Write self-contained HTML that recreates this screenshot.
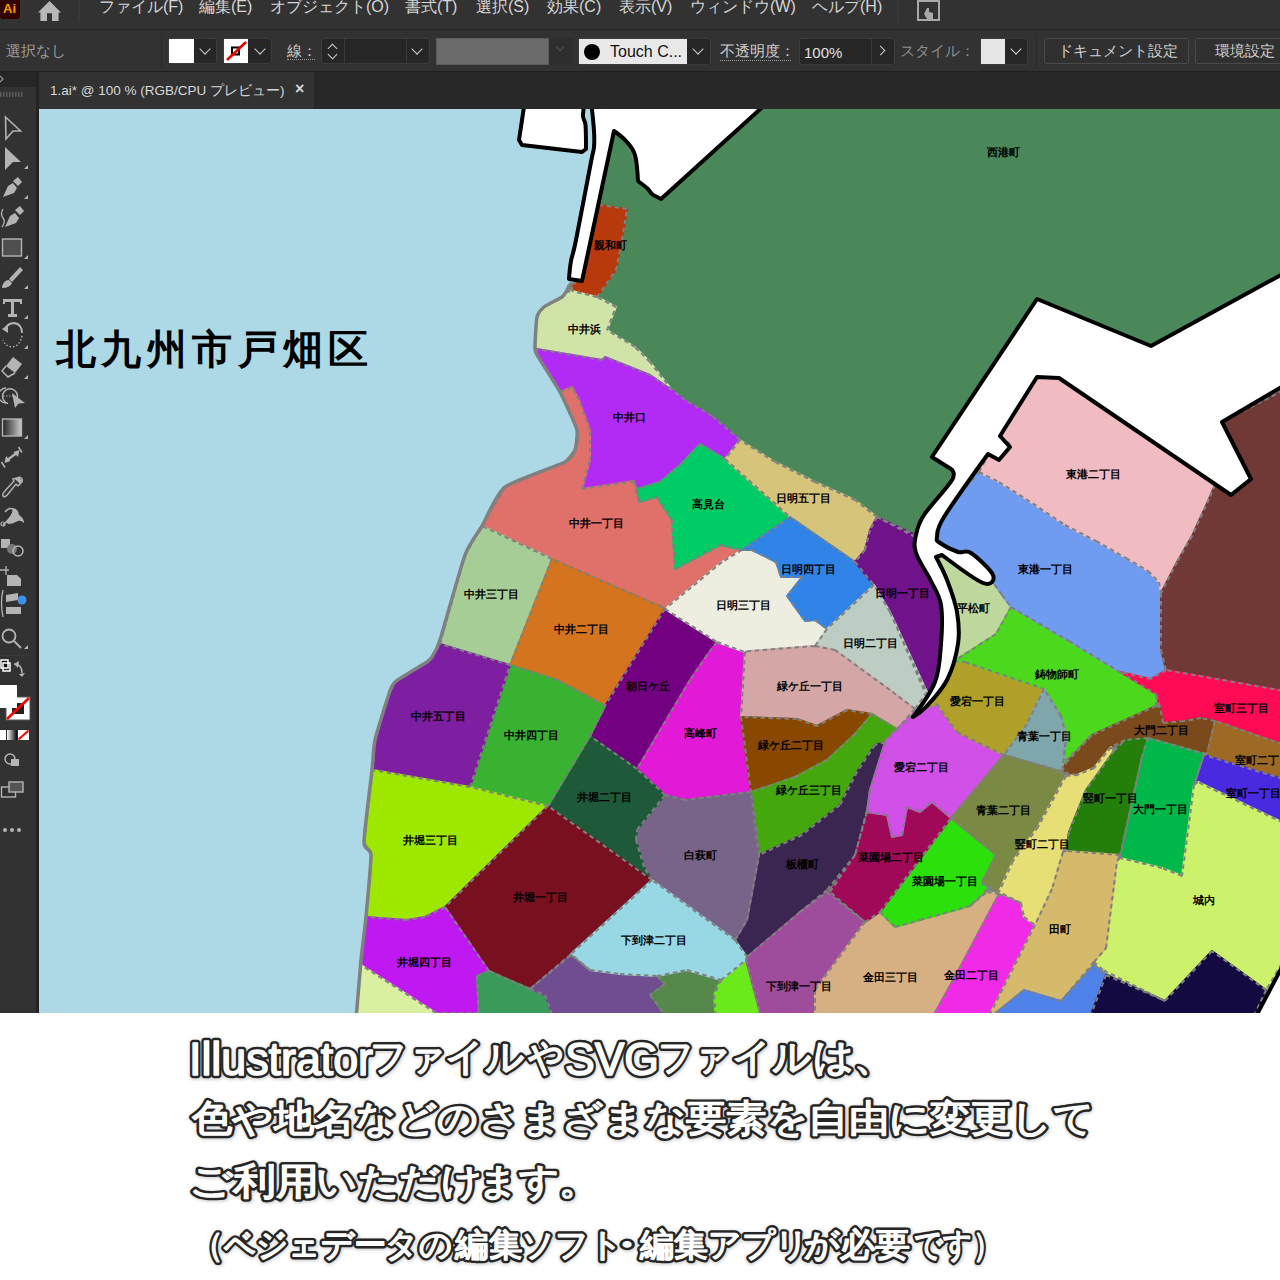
<!DOCTYPE html>
<html><head><meta charset="utf-8">
<style>
*{box-sizing:border-box;margin:0;padding:0}
html,body{width:1280px;height:1280px;overflow:hidden;background:#fff;font-family:"Liberation Sans",sans-serif}
.abs{position:absolute}
#menubar{left:0;top:0;width:1280px;height:30px;background:#323232;border-bottom:1px solid #282828}
#ctrl{left:0;top:30px;width:1280px;height:42px;background:#323232;border-bottom:1px solid #1f1f1f}
#tabbar{left:0;top:72px;width:1280px;height:37px;background:#282828}
#tools{left:0;top:72px;width:36px;height:941px;background:#323232}
#toolsep{left:36px;top:72px;width:3px;height:941px;background:#232323}
.mi{position:absolute;top:-3px;font-size:16px;color:#d6d6d6;white-space:nowrap;letter-spacing:0px}
.ct{position:absolute;font-size:15px;white-space:nowrap}
.dd{position:absolute;background:#262626;border:1px solid #3c3c3c;border-radius:3px}
.chev{position:absolute;width:8px;height:8px;border-right:1.6px solid #cfcfcf;border-bottom:1.6px solid #cfcfcf;transform:rotate(45deg)}
#map{left:0;top:0}
#bottom{left:0;top:1013px;width:1280px;height:267px;background:#fff}
.bt{position:absolute;white-space:nowrap;color:#fff;-webkit-text-stroke:0;font-weight:500}
</style></head><body>
<div id="menubar" class="abs">
  <div class="abs" style="left:0;top:0;width:20px;height:19px;background:#330000;border-radius:0 0 3px 3px"></div>
  <div class="abs" style="left:3px;top:1px;font-size:13px;font-weight:bold;color:#ff9a00">Ai</div>
  <svg class="abs" style="left:37px;top:0" width="26" height="22" viewBox="0 0 26 22"><path d="M12.5 1 L24 12.5 L21.6 12.5 L21.6 21 L15 21 L15 13.3 L10 13.3 L10 21 L3.4 21 L3.4 12.5 L1 12.5 Z" fill="#b8b8b8"/></svg>
  <div class="abs" style="left:78px;top:0;width:2px;height:22px;background:#383838"></div>
  <div class="mi" style="left:99px">ファイル(F)</div>
  <div class="mi" style="left:199px">編集(E)</div>
  <div class="mi" style="left:270px">オブジェクト(O)</div>
  <div class="mi" style="left:405px">書式(T)</div>
  <div class="mi" style="left:476px">選択(S)</div>
  <div class="mi" style="left:547px">効果(C)</div>
  <div class="mi" style="left:619px">表示(V)</div>
  <div class="mi" style="left:690px">ウィンドウ(W)</div>
  <div class="mi" style="left:812px">ヘルプ(H)</div>
  <div class="abs" style="left:897px;top:0;width:2px;height:22px;background:#383838"></div>
  <svg class="abs" style="left:916px;top:0" width="26" height="22" viewBox="0 0 26 22"><rect x="2" y="1" width="21" height="19" fill="none" stroke="#a8a8a8" stroke-width="2"/><path d="M11 8 L13 8 L13 12 L17 13 L17 19 L11 19 L8 14 Z" fill="#a8a8a8"/></svg>
</div>
<div id="ctrl" class="abs">
  <div class="ct" style="left:6px;top:12px;color:#9c9c9c">選択なし</div>
  <div class="abs" style="left:161px;top:4px;width:1px;height:34px;background:#2a2a2a"></div>
  <div class="dd" style="left:168px;top:8px;width:49px;height:26px"></div>
  <div class="abs" style="left:169px;top:9px;width:25px;height:24px;background:#fff"></div>
  <div class="chev" style="left:201px;top:15px"></div>
  <div class="dd" style="left:223px;top:8px;width:49px;height:26px"></div>
  <div class="abs" style="left:224px;top:9px;width:24px;height:24px;background:#fff"></div>
  <svg class="abs" style="left:224px;top:39px;top:9px" width="24" height="24"><rect x="8" y="8.5" width="7" height="7" fill="none" stroke="#000" stroke-width="2"/><line x1="3" y1="21" x2="22" y2="3" stroke="#e00" stroke-width="2.6"/></svg>
  <div class="chev" style="left:256px;top:15px"></div>
  <div class="ct" style="left:287px;top:12px;color:#cfcfcf">線：</div>
  <div class="abs" style="left:287px;top:29px;width:28px;height:0;border-top:1px dotted #9a9a9a"></div>
  <div class="dd" style="left:321px;top:8px;width:109px;height:26px"></div>
  <div class="abs" style="left:344px;top:9px;width:1px;height:24px;background:#3a3a3a"></div>
  <div class="abs" style="left:406px;top:9px;width:1px;height:24px;background:#3a3a3a"></div>
  <div class="abs" style="left:329px;top:15px;width:7px;height:7px;border-left:1.6px solid #cfcfcf;border-top:1.6px solid #cfcfcf;transform:rotate(45deg)"></div>
  <div class="abs" style="left:329px;top:21px;width:7px;height:7px;border-right:1.6px solid #cfcfcf;border-bottom:1.6px solid #cfcfcf;transform:rotate(45deg)"></div>
  <div class="chev" style="left:413px;top:15px"></div>
  <div class="abs" style="left:436px;top:8px;width:113px;height:27px;background:#6b6b6b;border:1px solid #5a5a5a"></div>
  <div class="abs" style="left:549px;top:8px;width:24px;height:27px;background:#2e2e2e"></div>
  <div class="abs" style="left:557px;top:14px;width:6px;height:6px;border-right:1.4px solid #555;border-bottom:1.4px solid #555;transform:rotate(45deg)"></div>
  <div class="dd" style="left:578px;top:8px;width:133px;height:27px"></div>
  <div class="abs" style="left:579px;top:9px;width:108px;height:25px;background:#e8e8e8"></div>
  <div class="abs" style="left:584px;top:14px;width:16px;height:16px;border-radius:50%;background:#000"></div>
  <div class="ct" style="left:610px;top:13px;color:#111;font-size:16px">Touch C...</div>
  <div class="chev" style="left:694px;top:15px"></div>
  <div class="ct" style="left:720px;top:12px;color:#cfcfcf">不透明度：</div>
  <div class="abs" style="left:720px;top:30px;width:71px;height:0;border-top:1px dotted #9a9a9a"></div>
  <div class="dd" style="left:799px;top:8px;width:96px;height:27px"></div>
  <div class="abs" style="left:871px;top:9px;width:1px;height:25px;background:#3a3a3a"></div>
  <div class="ct" style="left:804px;top:14px;color:#e0e0e0;font-size:15px">100%</div>
  <div class="abs" style="left:877px;top:17px;width:7px;height:7px;border-right:1.6px solid #cfcfcf;border-top:1.6px solid #cfcfcf;transform:rotate(45deg)"></div>
  <div class="ct" style="left:900px;top:12px;color:#8e8e8e">スタイル：</div>
  <div class="dd" style="left:980px;top:8px;width:48px;height:27px"></div>
  <div class="abs" style="left:981px;top:9px;width:24px;height:25px;background:#e6e6e6"></div>
  <div class="chev" style="left:1012px;top:15px"></div>
  <div class="abs" style="left:1036px;top:4px;width:1px;height:34px;background:#2a2a2a"></div>
  <div class="abs" style="left:1044px;top:8px;width:145px;height:26px;border:1px solid #4a4a4a;border-radius:3px;background:#303030"></div>
  <div class="ct" style="left:1058px;top:12px;color:#d0d0d0">ドキュメント設定</div>
  <div class="abs" style="left:1195px;top:8px;width:100px;height:26px;border:1px solid #4a4a4a;border-radius:3px;background:#303030"></div>
  <div class="ct" style="left:1215px;top:12px;color:#d0d0d0">環境設定</div>
</div>
<div id="tabbar" class="abs">
  <div class="abs" style="left:0;top:0;width:36px;height:15px;background:#262626"></div>
  <div class="abs" style="left:39px;top:0;width:275px;height:37px;background:#323232"></div>
  <div class="abs" style="left:50px;top:10px;font-size:13.5px;color:#d8d8d8;white-space:nowrap">1.ai* @ 100 % (RGB/CPU プレビュー)</div>
  <div class="abs" style="left:295px;top:8px;font-size:16px;color:#d8d8d8;font-weight:bold">×</div>
</div>
<div id="tools" class="abs"></div>
<svg class="abs" style="left:0;top:72px" width="36" height="941" viewBox="0 72 36 941">
 <rect x="0" y="72" width="36" height="15" fill="#262626"/>
 <g fill="#5c5c5c"><rect x="0" y="92" width="1.5" height="5"/><rect x="3" y="92" width="1.5" height="5"/><rect x="6" y="92" width="1.5" height="5"/><rect x="9" y="92" width="1.5" height="5"/><rect x="12" y="92" width="1.5" height="5"/><rect x="15" y="92" width="1.5" height="5"/><rect x="18" y="92" width="1.5" height="5"/><rect x="21" y="92" width="1.5" height="5"/></g>
 <path d="M0 76 L3 79 L0 82" fill="none" stroke="#9a9a9a" stroke-width="1.2"/>
 <g fill="#b4b4b4" stroke="none">
  <path d="M5.5 117 L20.5 131 L13 131 L6 139 Z" fill="none" stroke="#b4b4b4" stroke-width="1.6"/>
  <path d="M5 147 L21 162 L13 162 L5 170 Z"/>
  <path d="M24 169 L28 165 L28 169 Z"/>
  <path d="M13 181 L18 177 L22 182 L18 186 Z M3 197 L8 186 L13 183 L17 188 L14 193 Z"/>
  <path d="M24 199 L28 195 L28 199 Z"/>
  <path d="M15 210 L20 206 L24 211 L20 215 Z M5 227 L10 216 L15 213 L19 218 L16 223 Z"/>
  <path d="M3 209 Q0 214 3 218 Q6 222 2 227" fill="none" stroke="#b4b4b4" stroke-width="1.3"/>
  <rect x="2.5" y="239" width="19" height="17" fill="#4f4f4f" stroke="#b4b4b4" stroke-width="1.4"/>
  <path d="M24 259 L28 255 L28 259 Z"/>
  <path d="M20 267 L23 270 L12 282 L9 279 Z M2 288 Q3 280 9 280 L12 283 Q10 288 2 288 Z"/>
  <path d="M24 289 L28 285 L28 289 Z"/>
  <path d="M3 299 L22 299 L22 304 L20 304 L20 302 L14 302 L14 314 L17 314 L17 317 L8 317 L8 314 L11 314 L11 302 L5 302 L5 304 L3 304 Z"/>
  <path d="M24 319 L28 315 L28 319 Z"/>
  <path d="M4 330 Q8 323 14 323 Q22 324 22 333" fill="none" stroke="#b4b4b4" stroke-width="1.8"/>
  <path d="M2 329 L8 325 L8 333 Z"/>
  <path d="M22 336 Q20 346 12 347 Q5 346 3 340" fill="none" stroke="#b4b4b4" stroke-width="1.4" stroke-dasharray="1.4 2"/>
  <path d="M24 349 L28 345 L28 349 Z"/>
  <path d="M13 357 L22 364 L15 373 L6 366 Z" />
  <path d="M6 366 L2 371 L8 377 L15 373" fill="none" stroke="#b4b4b4" stroke-width="1.5"/>
  <path d="M24 379 L28 375 L28 379 Z"/>
  <path d="M17 399 A7.5 7.5 0 1 0 8 403.5" fill="none" stroke="#b4b4b4" stroke-width="1.5"/>
  <path d="M6 388 A6 6 0 0 0 6 403" fill="none" stroke="#b4b4b4" stroke-width="1.3"/>
  <path d="M3 396 L15 396" stroke="#b4b4b4" stroke-width="1.2" stroke-dasharray="1.5 1.5"/>
  <path d="M12 393 L25 403 L18.5 403.5 L15 408 Z"/>
  <defs><linearGradient id="gr" x1="0" x2="1"><stop offset="0" stop-color="#222"/><stop offset="1" stop-color="#ccc"/></linearGradient></defs>
  <rect x="2.5" y="419" width="19" height="17" fill="url(#gr)" stroke="#b4b4b4" stroke-width="1.4"/>
  <path d="M24 439 L28 435 L28 439 Z"/>
  <path d="M1.5 462 L5 467.5 M18.5 447 L22 452.5" stroke="#b4b4b4" stroke-width="1.5"/>
  <path d="M6 461 L18 452" stroke="#b4b4b4" stroke-width="2.2"/>
  <path d="M4.5 463 L6 456 L10.5 461 Z M19.5 450 L18 457 L13.5 452 Z"/>
  <path d="M17 478 Q20 476 22 479 Q23 482 20 484 L18 486 L16 484 L8 494 Q5 498 3 496 Q2 494 5 491 L14 481 L13 479 Z" fill="none" stroke="#b4b4b4" stroke-width="1.5"/>
  <path d="M15 479 L20 484 L22 481 L19 477 Z"/>
  <path d="M5 512 Q10 506 14 510 Q12 516 8 520 L3 525" fill="none" stroke="#b4b4b4" stroke-width="1.5"/>
  <path d="M6 522 Q15 512 12 508 Q18 508 19 515 Q24 518 24 523 Q20 519 16 522 Q12 524 8 524 Z"/>
  <circle cx="3" cy="524" r="2" fill="none" stroke="#b4b4b4" stroke-width="1.2"/>
  <rect x="1" y="539" width="9" height="9"/>
  <circle cx="12" cy="549" r="5" fill="#777"/>
  <circle cx="18" cy="551" r="5" fill="none" stroke="#b4b4b4" stroke-width="1.5"/>
  <path d="M6 566 L6 575 M0 570 L9 570" stroke="#b4b4b4" stroke-width="1.3"/>
  <path d="M7 575 L17 575 L21 579 L21 586 L7 586 Z"/>
  <path d="M3 590 Q0 603 3 617" fill="none" stroke="#b4b4b4" stroke-width="1.3"/>
  <path d="M6 595 L18 593 L18 600 L6 602 Z M6 607 L21 607 L21 614 L6 614 Z"/>
 </g>
 <circle cx="22" cy="600" r="4.5" fill="#3d8ff0"/>
 <g fill="none" stroke="#b4b4b4" stroke-width="1.8"><circle cx="9" cy="636" r="6.5"/><path d="M14 641 L21 648"/></g>
 <path d="M24 649 L28 645 L28 649 Z" fill="#b4b4b4"/>
 <rect x="0" y="655" width="30" height="1" fill="#3a3a3a"/>
 <g fill="none" stroke="#b4b4b4" stroke-width="1.5"><rect x="1" y="660" width="7" height="8" fill="#111" stroke="#fff"/><rect x="3" y="663" width="7" height="8" stroke="#fff"/><path d="M22 673 Q22 664 14 664"/></g>
 <path d="M19 661 L14 664 L18 668 Z M19 674 L22 677 L25 673 Z" fill="#b4b4b4"/>
 <rect x="6" y="697" width="24" height="23" fill="#fff" stroke="#555" stroke-width="1"/>
 <rect x="12" y="703" width="12" height="11" fill="#222"/>
 <line x1="7" y1="719" x2="29" y2="698" stroke="#f00" stroke-width="2.6"/>
 <rect x="0" y="685" width="17" height="23" fill="#fff"/>
 <rect x="0" y="730" width="6" height="10" fill="#fff"/>
 <rect x="7" y="730" width="10" height="10" fill="url(#gr2)"/>
 <defs><linearGradient id="gr2" x1="0" x2="1"><stop offset="0" stop-color="#fff"/><stop offset="1" stop-color="#000"/></linearGradient></defs>
 <rect x="18" y="730" width="11" height="10" fill="#fff"/>
 <line x1="18.5" y1="739.5" x2="28.5" y2="730.5" stroke="#f00" stroke-width="2"/>
 <circle cx="10" cy="759" r="5" fill="none" stroke="#b4b4b4" stroke-width="1.5"/>
 <rect x="11" y="759" width="8" height="7" fill="#b4b4b4"/>
 <g fill="none" stroke="#b4b4b4" stroke-width="1.4"><rect x="1.5" y="787" width="14" height="10"/><rect x="9" y="782" width="14" height="10" fill="#555"/></g>
 <g fill="#b4b4b4"><circle cx="5" cy="830" r="2"/><circle cx="12" cy="830" r="2"/><circle cx="19" cy="830" r="2"/></g>
</svg>
<div id="toolsep" class="abs"></div>
<div id="mapwrap" class="abs" style="left:39px;top:109px;width:1241px;height:904px;overflow:hidden;background:#add8e6">
<svg id="map" class="abs" style="left:-39px;top:-109px" width="1280" height="1280" viewBox="0 0 1280 1280">
<!--MAP-->
<polygon points="356,1020 361,960 366,917 371,855 364,842 372,770 375,740 388,697 395,682 427,662 432,657 440,640 465,555 482,526 505,487 565,462 575,450 577,430 560,392 537,355 535,347 537,317 544,307 562,297 566,292 569,286 572,283 572,283 580,281 614,131 1290,100 1290,1020" fill="#808080"/>
<polygon points="614,131 625,140 635,162 639,182 650,189 660,199 757,112 765,100 1290,100 1290,276 1151,346 1037,299 931,458 951,468 951,483 928,513 915,537 877,517 855,500 815,482 775,462 740,440 712,416 685,400 672,390 650,362 635,347 607,330 616,307 597,297 616,270 622,240 627,209 599,205" fill="#4a8759" stroke="#4a8759" stroke-width="2" stroke-linejoin="round"/>
<polygon points="599,205 627,209 622,240 616,270 597,297 572,291 572,284 580,281" fill="#b8390b" stroke="#b8390b" stroke-width="2" stroke-linejoin="round"/>
<polygon points="572,291 597,297 616,307 607,330 635,347 650,362 672,390 650,375 605,357 602,360 537,349 535,347 537,317 544,307 562,297 566,292" fill="#d0e4a8" stroke="#d0e4a8" stroke-width="2" stroke-linejoin="round"/>
<polygon points="537,349 602,360 605,357 650,375 672,390 685,400 712,416 740,440 725,459 700,444 680,465 660,482 637,489 634,481 582,489 590,460 590,430 579,400 572,387 560,392 537,355" fill="#b22af5" stroke="#b22af5" stroke-width="2" stroke-linejoin="round"/>
<polygon points="560,392 572,387 579,400 590,430 590,460 582,489 634,481 639,502 657,497 672,520 675,569 720,545 742,550 722,562 665,609 662,607 552,559 482,526 505,487 565,462 575,450 577,430" fill="#e0706a" stroke="#e0706a" stroke-width="2" stroke-linejoin="round"/>
<polygon points="482,526 552,559 510,665 440,644 465,555" fill="#a6cd95" stroke="#a6cd95" stroke-width="2" stroke-linejoin="round"/>
<polygon points="552,559 662,607 665,609 605,706 557,680 510,665" fill="#d4741e" stroke="#d4741e" stroke-width="2" stroke-linejoin="round"/>
<polygon points="665,609 717,642 707,655 690,680 637,769 590,736 605,706" fill="#720080" stroke="#720080" stroke-width="2" stroke-linejoin="round"/>
<polygon points="717,642 745,652 741,717 751,792 685,800 665,795 637,769 690,680 707,655" fill="#e21ad8" stroke="#e21ad8" stroke-width="2" stroke-linejoin="round"/>
<polygon points="742,550 752,550 776,562 781,577 802,577 787,596 805,621 815,620 827,629 815,646 750,651 745,652 717,642 665,609 722,562" fill="#eeeee0" stroke="#eeeee0" stroke-width="2" stroke-linejoin="round"/>
<polygon points="700,444 725,459 790,517 742,550 720,545 675,569 672,520 657,497 639,502 637,489 660,482 680,465" fill="#00cc66" stroke="#00cc66" stroke-width="2" stroke-linejoin="round"/>
<polygon points="725,459 740,440 775,462 815,482 855,500 877,517 870,530 865,550 855,562 790,517" fill="#d6c47a" stroke="#d6c47a" stroke-width="2" stroke-linejoin="round"/>
<polygon points="790,517 855,562 874,585 827,629 815,620 805,621 787,596 802,577 781,577 776,562 752,550 742,550" fill="#3084e8" stroke="#3084e8" stroke-width="2" stroke-linejoin="round"/>
<polygon points="877,517 920,537 922,553 936,581 946,605 946,644 940,684 920,712 927,697 890,612 874,585 855,562 865,550 870,530" fill="#70128a" stroke="#70128a" stroke-width="2" stroke-linejoin="round"/>
<polygon points="874,585 890,612 927,692 915,709 890,690 835,650 815,646 827,629" fill="#bdcdc4" stroke="#bdcdc4" stroke-width="2" stroke-linejoin="round"/>
<polygon points="745,652 750,651 815,646 835,650 890,690 915,709 897,729 872,714 847,710 817,726 797,719 741,717" fill="#d5a6a6" stroke="#d5a6a6" stroke-width="2" stroke-linejoin="round"/>
<polygon points="741,717 797,719 817,726 847,710 872,714 855,734 827,760 795,777 751,792" fill="#884800" stroke="#884800" stroke-width="2" stroke-linejoin="round"/>
<polygon points="751,792 795,777 827,760 855,734 872,714 897,729 885,742 875,745 857,772 840,805 802,835 759,855" fill="#44a80c" stroke="#44a80c" stroke-width="2" stroke-linejoin="round"/>
<polygon points="759,855 802,835 840,805 857,772 875,745 885,742 870,790 867,810 855,855 827,890 800,912 747,957 735,940 747,920" fill="#3a2650" stroke="#3a2650" stroke-width="2" stroke-linejoin="round"/>
<polygon points="665,795 685,800 751,792 759,855 747,920 735,940 652,880 644,867 636,840 637,830" fill="#786488" stroke="#786488" stroke-width="2" stroke-linejoin="round"/>
<polygon points="590,736 637,769 665,795 637,830 636,840 644,867 652,880 548,806" fill="#1e5a3a" stroke="#1e5a3a" stroke-width="2" stroke-linejoin="round"/>
<polygon points="510,665 557,680 605,706 590,736 548,806 470,787" fill="#38b230" stroke="#38b230" stroke-width="2" stroke-linejoin="round"/>
<polygon points="440,644 510,665 470,787 373,770 375,740 388,697 395,682 427,662 432,657" fill="#7e1ea0" stroke="#7e1ea0" stroke-width="2" stroke-linejoin="round"/>
<polygon points="373,770 470,787 548,806 445,907 425,917 407,920 366,917 371,855 364,842" fill="#9ee800" stroke="#9ee800" stroke-width="2" stroke-linejoin="round"/>
<polygon points="548,806 652,880 571,954 530,989 489,971 445,907" fill="#781020" stroke="#781020" stroke-width="2" stroke-linejoin="round"/>
<polygon points="366,917 407,920 425,917 445,907 489,971 477,976 479,1013 436,1013 361,965" fill="#c018f0" stroke="#c018f0" stroke-width="2" stroke-linejoin="round"/>
<polygon points="361,965 436,1013 436,1020 356,1020" fill="#d8f0a0" stroke="#d8f0a0" stroke-width="2" stroke-linejoin="round"/>
<polygon points="477,976 489,971 530,989 545,995 554,1020 479,1020" fill="#3a9a5a" stroke="#3a9a5a" stroke-width="2" stroke-linejoin="round"/>
<polygon points="530,989 571,955 590,970 620,974 657,976 665,984 650,995 669,1020 554,1020 545,995" fill="#704c90" stroke="#704c90" stroke-width="2" stroke-linejoin="round"/>
<polygon points="657,976 687,970 721,980 714,995 716,1020 669,1020 650,995 665,984" fill="#55884a" stroke="#55884a" stroke-width="2" stroke-linejoin="round"/>
<polygon points="721,980 746,960 762,1020 716,1020 714,995" fill="#6aea1a" stroke="#6aea1a" stroke-width="2" stroke-linejoin="round"/>
<polygon points="652,880 735,940 747,957 746,960 721,980 687,970 657,976 620,974 590,970 571,954" fill="#98d8e4" stroke="#98d8e4" stroke-width="2" stroke-linejoin="round"/>
<polygon points="747,957 800,912 827,892 865,922 815,990 815,1020 762,1020 746,960" fill="#a04c9c" stroke="#a04c9c" stroke-width="2" stroke-linejoin="round"/>
<polygon points="865,922 880,912 895,927 920,920 970,906 987,892 999,894 957,973 931,1020 815,1020 815,990" fill="#d6b082" stroke="#d6b082" stroke-width="2" stroke-linejoin="round"/>
<polygon points="999,894 1021,903 1024,917 1035,925 987,1020 931,1020 957,973" fill="#f02ae6" stroke="#f02ae6" stroke-width="2" stroke-linejoin="round"/>
<polygon points="951,818 996,855 982,882 987,890 970,906 920,920 895,927 880,912" fill="#2ce00c" stroke="#2ce00c" stroke-width="2" stroke-linejoin="round"/>
<polygon points="867,812 887,815 892,837 902,835 907,807 920,812 932,802 951,818 880,912 865,922 830,892 855,855" fill="#a00858" stroke="#a00858" stroke-width="2" stroke-linejoin="round"/>
<polygon points="897,729 915,712 920,710 937,704 957,732 1004,755 951,818 932,802 920,812 907,807 902,835 892,837 887,815 867,812 870,790 885,742" fill="#d050e8" stroke="#d050e8" stroke-width="2" stroke-linejoin="round"/>
<polygon points="954,661 965,662 1044,689 1027,724 1004,755 957,732 937,704 920,710 943,680" fill="#b0a02a" stroke="#b0a02a" stroke-width="2" stroke-linejoin="round"/>
<polygon points="932,552 959,564 982,580 990,578 1002,595 1011,607 996,634 954,661 943,680 953,644 952,612 942,580" fill="#bed79d" stroke="#bed79d" stroke-width="2" stroke-linejoin="round"/>
<polygon points="1011,607 1069,641 1120,672 1156,694 1156,706 1092,735 1063,763 1066,735 1061,716 1044,689 965,662 954,661 996,634" fill="#4cd81c" stroke="#4cd81c" stroke-width="2" stroke-linejoin="round"/>
<polygon points="1044,689 1061,716 1066,735 1066,742 1062,771 1004,755 1027,724" fill="#7fa6aa" stroke="#7fa6aa" stroke-width="2" stroke-linejoin="round"/>
<polygon points="979,472 999,482 1026,499 1065,525 1096,541 1126,558 1148,571 1159,582 1161,593 1161,650 1166,670 1151,679 1120,672 1069,641 1011,607 1002,595 990,578 989,569 971,552 957,552 932,538 940,517" fill="#6f9bf0" stroke="#6f9bf0" stroke-width="2" stroke-linejoin="round"/>
<polygon points="1037,377 1059,378 1215,485 1209,499 1192,536 1177,562 1161,593 1159,582 1148,571 1126,558 1096,541 1065,525 1026,499 999,482 979,472 989,454 998,459 1010,444 1000,436" fill="#f0bcc2" stroke="#f0bcc2" stroke-width="2" stroke-linejoin="round"/>
<polygon points="1215,485 1231,495 1251,479 1222,422 1290,387 1290,692 1166,670 1161,650 1161,593 1177,562 1192,536 1209,499" fill="#713936" stroke="#713936" stroke-width="2" stroke-linejoin="round"/>
<polygon points="1120,672 1151,679 1166,670 1290,692 1290,747 1215,721 1201,718 1184,721 1163,723 1160,707 1156,694" fill="#ff0a55" stroke="#ff0a55" stroke-width="2" stroke-linejoin="round"/>
<polygon points="1156,706 1160,707 1163,723 1184,721 1201,718 1215,721 1207,754 1148,738 1125,740 1111,747 1094,768 1077,775 1062,772 1066,763 1092,735" fill="#7a4a1c" stroke="#7a4a1c" stroke-width="2" stroke-linejoin="round"/>
<polygon points="1215,721 1290,747 1290,781 1204,755 1207,754" fill="#9c6a24" stroke="#9c6a24" stroke-width="2" stroke-linejoin="round"/>
<polygon points="1204,755 1290,781 1290,826 1198,782 1194,785" fill="#4a2ae0" stroke="#4a2ae0" stroke-width="2" stroke-linejoin="round"/>
<polygon points="1004,755 1062,772 1066,776 1038,827 1013,861 999,892 982,882 996,855 951,818" fill="#7a8a44" stroke="#7a8a44" stroke-width="2" stroke-linejoin="round"/>
<polygon points="1066,776 1077,775 1094,768 1111,747 1114,751 1086,790 1069,832 1063,852 1052,889 1035,925 1024,917 1021,903 999,892 1013,861 1038,827" fill="#e8de76" stroke="#e8de76" stroke-width="2" stroke-linejoin="round"/>
<polygon points="1114,751 1125,740 1148,738 1142,757 1120,855 1066,851 1069,832 1086,790" fill="#237e0a" stroke="#237e0a" stroke-width="2" stroke-linejoin="round"/>
<polygon points="1148,738 1204,754 1194,785 1182,876 1162,868 1120,858 1142,757" fill="#00b84a" stroke="#00b84a" stroke-width="2" stroke-linejoin="round"/>
<polygon points="1194,785 1198,782 1290,826 1290,950 1266,990 1212,951 1165,1001 1103,970 1094,962 1106,948 1117,861 1120,858 1162,868 1182,876" fill="#ccf26c" stroke="#ccf26c" stroke-width="2" stroke-linejoin="round"/>
<polygon points="1063,852 1066,851 1120,855 1117,861 1106,948 1094,962 1061,1001 1024,990 987,1020 1035,925 1052,889" fill="#d6ba6c" stroke="#d6ba6c" stroke-width="2" stroke-linejoin="round"/>
<polygon points="987,1020 1024,990 1061,1001 1094,965 1106,975 1089,1020" fill="#4f82e8" stroke="#4f82e8" stroke-width="2" stroke-linejoin="round"/>
<polygon points="1106,975 1165,1001 1212,951 1266,990 1252,1020 1089,1020" fill="#120a40" stroke="#120a40" stroke-width="2" stroke-linejoin="round"/>
<g fill="none" stroke="#808080" stroke-width="2" stroke-dasharray="4.5 3.5">
<path d="M614,131L625,140M625,140L635,162M635,162L639,182M639,182L650,189M650,189L660,199M660,199L757,112M757,112L765,100M765,100L1290,100M1290,100L1290,276M1290,276L1151,346M1151,346L1037,299M1037,299L931,458M931,458L951,468M951,468L951,483M951,483L928,513M928,513L915,537M915,537L877,517M877,517L855,500M855,500L815,482M815,482L775,462M775,462L740,440M740,440L712,416M712,416L685,400M685,400L672,390M672,390L650,362M650,362L635,347M635,347L607,330M607,330L616,307M616,307L597,297M597,297L616,270M616,270L622,240M622,240L627,209M627,209L599,205M599,205L614,131M597,297L572,291M572,291L572,284M572,284L580,281M580,281L599,205M672,390L650,375M650,375L605,357M605,357L602,360M602,360L537,349M537,349L535,347M535,347L537,317M537,317L544,307M544,307L562,297M562,297L566,292M566,292L572,291M740,440L725,459M725,459L700,444M700,444L680,465M680,465L660,482M660,482L637,489M637,489L634,481M634,481L582,489M582,489L590,460M590,460L590,430M590,430L579,400M579,400L572,387M572,387L560,392M560,392L537,355M537,355L537,349M634,481L639,502M639,502L657,497M657,497L672,520M672,520L675,569M675,569L720,545M720,545L742,550M742,550L722,562M722,562L665,609M665,609L662,607M662,607L552,559M552,559L482,526M482,526L505,487M505,487L565,462M565,462L575,450M575,450L577,430M577,430L560,392M552,559L510,665M510,665L440,644M440,644L465,555M465,555L482,526M665,609L605,706M605,706L557,680M557,680L510,665M665,609L717,642M717,642L707,655M707,655L690,680M690,680L637,769M637,769L590,736M590,736L605,706M717,642L745,652M745,652L741,717M741,717L751,792M751,792L685,800M685,800L665,795M665,795L637,769M742,550L752,550M752,550L776,562M776,562L781,577M781,577L802,577M802,577L787,596M787,596L805,621M805,621L815,620M815,620L827,629M827,629L815,646M815,646L750,651M750,651L745,652M725,459L790,517M790,517L742,550M639,502L637,489M877,517L870,530M870,530L865,550M865,550L855,562M855,562L790,517M855,562L874,585M874,585L827,629M877,517L920,537M920,537L922,553M922,553L936,581M936,581L946,605M946,605L946,644M946,644L940,684M940,684L920,712M920,712L927,697M927,697L890,612M890,612L874,585M890,612L927,692M927,692L915,709M915,709L890,690M890,690L835,650M835,650L815,646M915,709L897,729M897,729L872,714M872,714L847,710M847,710L817,726M817,726L797,719M797,719L741,717M872,714L855,734M855,734L827,760M827,760L795,777M795,777L751,792M897,729L885,742M885,742L875,745M875,745L857,772M857,772L840,805M840,805L802,835M802,835L759,855M759,855L751,792M885,742L870,790M870,790L867,810M867,810L855,855M855,855L827,890M827,890L800,912M800,912L747,957M747,957L735,940M735,940L747,920M747,920L759,855M735,940L652,880M652,880L644,867M644,867L636,840M636,840L637,830M637,830L665,795M652,880L548,806M548,806L590,736M548,806L470,787M470,787L510,665M470,787L373,770M373,770L375,740M375,740L388,697M388,697L395,682M395,682L427,662M427,662L432,657M432,657L440,644M548,806L445,907M445,907L425,917M425,917L407,920M407,920L366,917M366,917L371,855M371,855L364,842M364,842L373,770M652,880L571,954M571,954L530,989M530,989L489,971M489,971L445,907M489,971L477,976M477,976L479,1013M479,1013L436,1013M436,1013L361,965M361,965L366,917M436,1013L436,1020M436,1020L356,1020M356,1020L361,965M530,989L545,995M545,995L554,1020M554,1020L479,1020M479,1020L477,976M530,989L571,955M571,955L590,970M590,970L620,974M620,974L657,976M657,976L665,984M665,984L650,995M650,995L669,1020M669,1020L554,1020M657,976L687,970M687,970L721,980M721,980L714,995M714,995L716,1020M716,1020L669,1020M721,980L746,960M746,960L762,1020M762,1020L716,1020M747,957L746,960M590,970L571,954M800,912L827,892M827,892L865,922M865,922L815,990M815,990L815,1020M815,1020L762,1020M865,922L880,912M880,912L895,927M895,927L920,920M920,920L970,906M970,906L987,892M987,892L999,894M999,894L957,973M957,973L931,1020M931,1020L815,1020M999,894L1021,903M1021,903L1024,917M1024,917L1035,925M1035,925L987,1020M987,1020L931,1020M951,818L996,855M996,855L982,882M982,882L987,890M987,890L970,906M880,912L951,818M867,812L887,815M887,815L892,837M892,837L902,835M902,835L907,807M907,807L920,812M920,812L932,802M932,802L951,818M865,922L830,892M830,892L855,855M855,855L867,812M897,729L915,712M915,712L920,710M920,710L937,704M937,704L957,732M957,732L1004,755M1004,755L951,818M867,812L870,790M954,661L965,662M965,662L1044,689M1044,689L1027,724M1027,724L1004,755M920,710L943,680M943,680L954,661M932,552L959,564M959,564L982,580M982,580L990,578M990,578L1002,595M1002,595L1011,607M1011,607L996,634M996,634L954,661M943,680L953,644M953,644L952,612M952,612L942,580M942,580L932,552M1011,607L1069,641M1069,641L1120,672M1120,672L1156,694M1156,694L1156,706M1156,706L1092,735M1092,735L1063,763M1063,763L1066,735M1066,735L1061,716M1061,716L1044,689M1066,735L1066,742M1066,742L1062,771M1062,771L1004,755M979,472L999,482M999,482L1026,499M1026,499L1065,525M1065,525L1096,541M1096,541L1126,558M1126,558L1148,571M1148,571L1159,582M1159,582L1161,593M1161,593L1161,650M1161,650L1166,670M1166,670L1151,679M1151,679L1120,672M990,578L989,569M989,569L971,552M971,552L957,552M957,552L932,538M932,538L940,517M940,517L979,472M1037,377L1059,378M1059,378L1215,485M1215,485L1209,499M1209,499L1192,536M1192,536L1177,562M1177,562L1161,593M979,472L989,454M989,454L998,459M998,459L1010,444M1010,444L1000,436M1000,436L1037,377M1215,485L1231,495M1231,495L1251,479M1251,479L1222,422M1222,422L1290,387M1290,387L1290,692M1290,692L1166,670M1290,692L1290,747M1290,747L1215,721M1215,721L1201,718M1201,718L1184,721M1184,721L1163,723M1163,723L1160,707M1160,707L1156,694M1156,706L1160,707M1215,721L1207,754M1207,754L1148,738M1148,738L1125,740M1125,740L1111,747M1111,747L1094,768M1094,768L1077,775M1077,775L1062,772M1062,772L1066,763M1066,763L1092,735M1290,747L1290,781M1290,781L1204,755M1204,755L1207,754M1290,781L1290,826M1290,826L1198,782M1198,782L1194,785M1194,785L1204,755M1004,755L1062,772M1062,772L1066,776M1066,776L1038,827M1038,827L1013,861M1013,861L999,892M999,892L982,882M1066,776L1077,775M1111,747L1114,751M1114,751L1086,790M1086,790L1069,832M1069,832L1063,852M1063,852L1052,889M1052,889L1035,925M1021,903L999,892M1114,751L1125,740M1148,738L1142,757M1142,757L1120,855M1120,855L1066,851M1066,851L1069,832M1148,738L1204,754M1204,754L1194,785M1194,785L1182,876M1182,876L1162,868M1162,868L1120,858M1120,858L1142,757M1290,826L1290,950M1290,950L1266,990M1266,990L1212,951M1212,951L1165,1001M1165,1001L1103,970M1103,970L1094,962M1094,962L1106,948M1106,948L1117,861M1117,861L1120,858M1063,852L1066,851M1120,855L1117,861M1094,962L1061,1001M1061,1001L1024,990M1024,990L987,1020M1061,1001L1094,965M1094,965L1106,975M1106,975L1089,1020M1089,1020L987,1020M1106,975L1165,1001M1266,990L1252,1020M1252,1020L1089,1020"/>
</g>
<path d="M572.0,283.0 C571.7,283.3 569.6,285.1 569.0,286.0 C568.4,286.9 566.7,290.9 566.0,292.0 C565.3,293.1 564.2,295.5 562.0,297.0 C559.8,298.5 546.5,305.0 544.0,307.0 C541.5,309.0 537.9,313.0 537.0,317.0 C536.1,321.0 535.0,343.2 535.0,347.0 C535.0,350.8 534.5,350.5 537.0,355.0 C539.5,359.5 556.0,384.5 560.0,392.0 C564.0,399.5 575.5,424.2 577.0,430.0 C578.5,435.8 576.2,446.8 575.0,450.0 C573.8,453.2 572.0,458.3 565.0,462.0 C558.0,465.7 513.3,480.6 505.0,487.0 C496.7,493.4 486.0,519.2 482.0,526.0 C478.0,532.8 469.2,543.6 465.0,555.0 C460.8,566.4 443.3,629.8 440.0,640.0 C436.7,650.2 433.3,654.8 432.0,657.0 C430.7,659.2 430.7,659.5 427.0,662.0 C423.3,664.5 398.9,678.5 395.0,682.0 C391.1,685.5 390.0,691.2 388.0,697.0 C386.0,702.8 376.6,732.7 375.0,740.0 C373.4,747.3 373.1,759.8 372.0,770.0 C370.9,780.2 364.1,833.5 364.0,842.0 C363.9,850.5 370.8,847.5 371.0,855.0 C371.2,862.5 367.0,906.5 366.0,917.0 C365.0,927.5 362.0,949.7 361.0,960.0 C360.0,970.3 356.5,1014.0 356.0,1020.0" fill="none" stroke="#808080" stroke-width="3.5" stroke-linejoin="round"/>
<path d="M525.0,100.0 C525.0,100.0 519.0,140.0 519.0,140.0 C519.0,140.0 522.0,145.0 522.0,145.0 C522.0,145.0 582.0,152.0 582.0,152.0 C582.0,152.0 586.0,149.0 586.0,149.0 C586.0,149.0 586.0,130.5 585.5,125.0 C585.0,119.5 583.1,120.2 583.0,116.0 C582.9,111.8 585.0,100.0 585.0,100.0 C585.0,100.0 525.0,100.0 525.0,100.0 Z" fill="#fff" stroke="#000" stroke-width="4" stroke-linejoin="round"/>
<path d="M591.0,100.0 C591.0,100.0 593.5,123.2 594.0,131.0 C594.5,138.8 594.5,141.8 594.0,147.0 C593.5,152.2 594.0,146.5 591.0,162.0 C588.0,177.5 579.3,223.5 576.0,240.0 C572.7,256.5 572.2,254.5 571.0,261.0 C569.8,267.5 569.0,279.0 569.0,279.0 C569.0,279.0 582.0,281.0 582.0,281.0 C582.0,281.0 614.0,131.0 614.0,131.0 C614.0,131.0 622.5,137.0 626.0,141.0 C629.5,145.0 633.0,148.3 635.0,155.0 C637.0,161.7 638.0,181.0 638.0,181.0 C638.0,181.0 645.7,186.8 648.0,189.0 C650.3,191.2 649.8,192.3 652.0,194.0 C654.2,195.7 661.0,199.0 661.0,199.0 C661.0,199.0 757.0,112.0 757.0,112.0 C757.0,112.0 770.0,100.0 770.0,100.0 C770.0,100.0 591.0,100.0 591.0,100.0 Z" fill="#fff" stroke="#000" stroke-width="4" stroke-linejoin="round"/>
<path d="M931.9,457.0 C931.9,457.0 1037.0,299.0 1037.0,299.0 C1037.0,299.0 1151.0,346.0 1151.0,346.0 C1151.0,346.0 1290.0,270.0 1290.0,270.0 C1290.0,270.0 1290.0,382.0 1290.0,382.0 C1290.0,382.0 1222.0,422.0 1222.0,422.0 C1222.0,422.0 1251.0,479.0 1251.0,479.0 C1251.0,479.0 1231.0,495.0 1231.0,495.0 C1231.0,495.0 1059.0,378.0 1059.0,378.0 C1059.0,378.0 1037.0,377.0 1037.0,377.0 C1037.0,377.0 1000.0,436.0 1000.0,436.0 C1000.0,436.0 1010.0,447.0 1010.0,447.0 C1010.0,447.0 999.0,460.0 999.0,460.0 C999.0,460.0 988.0,454.0 988.0,454.0 C988.0,454.0 952.5,503.2 944.0,517.0 C935.5,530.8 937.7,532.7 937.0,537.0 C936.3,541.3 936.5,540.5 940.0,543.0 C943.5,545.5 952.8,550.3 958.0,552.0 C963.2,553.7 965.2,549.2 971.0,553.0 C976.8,556.8 991.0,570.0 993.0,575.0 C995.0,580.0 991.5,586.3 983.0,583.0 C974.5,579.7 942.0,555.0 942.0,555.0 C942.0,555.0 936.0,557.0 936.0,557.0 C936.0,557.0 943.5,570.8 947.0,580.0 C950.5,589.2 955.2,601.3 957.0,612.0 C958.8,622.7 959.7,632.7 958.0,644.0 C956.3,655.3 952.3,669.5 947.0,680.0 C941.7,690.5 931.7,700.8 926.0,707.0 C920.3,713.2 913.0,717.0 913.0,717.0 C913.0,717.0 930.3,694.2 935.0,682.0 C939.7,669.8 940.0,656.8 941.0,644.0 C942.0,631.2 942.7,615.5 941.0,605.0 C939.3,594.5 935.2,589.7 931.0,581.0 C926.8,572.3 918.5,560.7 916.0,553.0 C913.5,545.3 914.7,541.3 916.0,535.0 C917.3,528.7 918.0,524.2 924.0,515.0 C930.0,505.8 947.5,487.7 952.0,480.0 C956.5,472.3 951.0,469.0 951.0,469.0 C951.0,469.0 931.9,457.0 931.9,457.0 Z" fill="#fff" stroke="#000" stroke-width="4" stroke-linejoin="round"/>
<path d="M1291.0,950.0 C1291.0,950.0 1254.0,1020.0 1254.0,1020.0 C1254.0,1020.0 1300.0,1020.0 1300.0,1020.0 C1300.0,1020.0 1291.0,950.0 1291.0,950.0 Z" fill="#fff" stroke="#000" stroke-width="4" stroke-linejoin="round"/>
<g font-size="11" font-weight="bold" fill="#000" text-anchor="middle" font-family="Liberation Sans, sans-serif">
<text x="1003" y="156">西港町</text>
<text x="610" y="249">親和町</text>
<text x="584" y="333">中井浜</text>
<text x="629" y="421">中井口</text>
<text x="596" y="527">中井一丁目</text>
<text x="491" y="598">中井三丁目</text>
<text x="581" y="633">中井二丁目</text>
<text x="648" y="690">朝日ケ丘</text>
<text x="700" y="737">高峰町</text>
<text x="743" y="609">日明三丁目</text>
<text x="708" y="508">高見台</text>
<text x="803" y="502">日明五丁目</text>
<text x="808" y="573">日明四丁目</text>
<text x="902" y="597">日明一丁目</text>
<text x="870" y="647">日明二丁目</text>
<text x="810" y="690">緑ケ丘一丁目</text>
<text x="791" y="749">緑ケ丘二丁目</text>
<text x="809" y="794">緑ケ丘三丁目</text>
<text x="802" y="868">板櫃町</text>
<text x="700" y="859">白萩町</text>
<text x="604" y="801">井堀二丁目</text>
<text x="531" y="739">中井四丁目</text>
<text x="438" y="720">中井五丁目</text>
<text x="430" y="844">井堀三丁目</text>
<text x="540" y="901">井堀一丁目</text>
<text x="424" y="966">井堀四丁目</text>
<text x="654" y="944">下到津二丁目</text>
<text x="799" y="990">下到津一丁目</text>
<text x="890" y="981">金田三丁目</text>
<text x="971" y="979">金田二丁目</text>
<text x="945" y="885">菜園場一丁目</text>
<text x="891" y="861">菜園場二丁目</text>
<text x="921" y="771">愛宕二丁目</text>
<text x="977" y="705">愛宕一丁目</text>
<text x="973" y="612">平松町</text>
<text x="1057" y="678">鋳物師町</text>
<text x="1044" y="740">青葉一丁目</text>
<text x="1045" y="573">東港一丁目</text>
<text x="1093" y="478">東港二丁目</text>
<text x="1241" y="712">室町三丁目</text>
<text x="1161" y="734">大門二丁目</text>
<text x="1262" y="764">室町二丁目</text>
<text x="1253" y="797">室町一丁目</text>
<text x="1003" y="814">青葉二丁目</text>
<text x="1042" y="848">竪町二丁目</text>
<text x="1110" y="802">竪町一丁目</text>
<text x="1160" y="813">大門一丁目</text>
<text x="1204" y="904">城内</text>
<text x="1060" y="933">田町</text>
</g>
<!--/MAP-->
</svg>
<div class="abs" style="left:17px;top:213px;font-size:40px;letter-spacing:5.4px;color:#000;white-space:nowrap;-webkit-text-stroke:1.3px #000">北九州市戸畑区</div>
</div>
<div id="bottom" class="abs">
<svg width="1280" height="267" viewBox="0 1013 1280 267" style="position:absolute;left:0;top:0">
<defs><filter id="sh" x="-5%" y="-30%" width="110%" height="160%"><feGaussianBlur stdDeviation="1.6"/></filter></defs>
<g font-family="Liberation Sans, sans-serif" stroke-linejoin="round">
<g stroke="#888" stroke-width="8" fill="#888" filter="url(#sh)" opacity="0.35" transform="translate(0.5,1)">
<text x="189.0" y="1075.0" font-size="46" textLength="184.0" lengthAdjust="spacingAndGlyphs">Illustrator</text>
<text x="370.0" y="1070.0" font-size="38" textLength="75.2" lengthAdjust="spacingAndGlyphs">ファ</text>
<text x="445.0" y="1070.0" font-size="38" textLength="79.0" lengthAdjust="spacingAndGlyphs">イル</text>
<text x="528.0" y="1070.0" font-size="38" textLength="36.0" lengthAdjust="spacingAndGlyphs">や</text>
<text x="565.0" y="1075.0" font-size="46" textLength="94.0" lengthAdjust="spacingAndGlyphs">SVG</text>
<text x="658.0" y="1070.0" font-size="38" textLength="72.2" lengthAdjust="spacingAndGlyphs">ファ</text>
<text x="732.0" y="1070.0" font-size="38" textLength="79.0" lengthAdjust="spacingAndGlyphs">イル</text>
<text x="813.0" y="1070.0" font-size="38" textLength="81.8" lengthAdjust="spacingAndGlyphs">は、</text>
<text x="192.0" y="1131.0" font-size="37" textLength="902.0" lengthAdjust="spacingAndGlyphs">色や地名などのさまざまな要素を自由に変更して</text>
<text x="189.0" y="1194.0" font-size="37" textLength="130.2" lengthAdjust="spacingAndGlyphs">ご利用</text>
<text x="316.0" y="1194.0" font-size="37" textLength="166.1" lengthAdjust="spacingAndGlyphs">いただけ</text>
<text x="478.0" y="1194.0" font-size="37" textLength="120.5" lengthAdjust="spacingAndGlyphs">ます。</text>
<text x="192.0" y="1256.0" font-size="33" textLength="128.9" lengthAdjust="spacingAndGlyphs">（ベジェ</text>
<text x="321.0" y="1256.0" font-size="33" textLength="66.0" lengthAdjust="spacingAndGlyphs">デー</text>
<text x="385.0" y="1256.0" font-size="33" textLength="67.1" lengthAdjust="spacingAndGlyphs">タの</text>
<text x="455.0" y="1256.0" font-size="33" textLength="67.2" lengthAdjust="spacingAndGlyphs">編集</text>
<text x="521.0" y="1256.0" font-size="33" textLength="101.9" lengthAdjust="spacingAndGlyphs">ソフト</text>
<text x="605.0" y="1256.0" font-size="33" textLength="43.1" lengthAdjust="spacingAndGlyphs">・</text>
<text x="640.0" y="1256.0" font-size="33" textLength="68.2" lengthAdjust="spacingAndGlyphs">編集</text>
<text x="708.0" y="1256.0" font-size="33" textLength="100.8" lengthAdjust="spacingAndGlyphs">アプリ</text>
<text x="804.0" y="1256.0" font-size="33" textLength="106.0" lengthAdjust="spacingAndGlyphs">が必要</text>
<text x="914.0" y="1256.0" font-size="33" textLength="86.9" lengthAdjust="spacingAndGlyphs">です）</text>
</g>
<g stroke="#262626" stroke-width="6.5" fill="#262626">
<text x="189.0" y="1075.0" font-size="46" textLength="184.0" lengthAdjust="spacingAndGlyphs">Illustrator</text>
<text x="370.0" y="1070.0" font-size="38" textLength="75.2" lengthAdjust="spacingAndGlyphs">ファ</text>
<text x="445.0" y="1070.0" font-size="38" textLength="79.0" lengthAdjust="spacingAndGlyphs">イル</text>
<text x="528.0" y="1070.0" font-size="38" textLength="36.0" lengthAdjust="spacingAndGlyphs">や</text>
<text x="565.0" y="1075.0" font-size="46" textLength="94.0" lengthAdjust="spacingAndGlyphs">SVG</text>
<text x="658.0" y="1070.0" font-size="38" textLength="72.2" lengthAdjust="spacingAndGlyphs">ファ</text>
<text x="732.0" y="1070.0" font-size="38" textLength="79.0" lengthAdjust="spacingAndGlyphs">イル</text>
<text x="813.0" y="1070.0" font-size="38" textLength="81.8" lengthAdjust="spacingAndGlyphs">は、</text>
<text x="192.0" y="1131.0" font-size="37" textLength="902.0" lengthAdjust="spacingAndGlyphs">色や地名などのさまざまな要素を自由に変更して</text>
<text x="189.0" y="1194.0" font-size="37" textLength="130.2" lengthAdjust="spacingAndGlyphs">ご利用</text>
<text x="316.0" y="1194.0" font-size="37" textLength="166.1" lengthAdjust="spacingAndGlyphs">いただけ</text>
<text x="478.0" y="1194.0" font-size="37" textLength="120.5" lengthAdjust="spacingAndGlyphs">ます。</text>
<text x="192.0" y="1256.0" font-size="33" textLength="128.9" lengthAdjust="spacingAndGlyphs">（ベジェ</text>
<text x="321.0" y="1256.0" font-size="33" textLength="66.0" lengthAdjust="spacingAndGlyphs">デー</text>
<text x="385.0" y="1256.0" font-size="33" textLength="67.1" lengthAdjust="spacingAndGlyphs">タの</text>
<text x="455.0" y="1256.0" font-size="33" textLength="67.2" lengthAdjust="spacingAndGlyphs">編集</text>
<text x="521.0" y="1256.0" font-size="33" textLength="101.9" lengthAdjust="spacingAndGlyphs">ソフト</text>
<text x="605.0" y="1256.0" font-size="33" textLength="43.1" lengthAdjust="spacingAndGlyphs">・</text>
<text x="640.0" y="1256.0" font-size="33" textLength="68.2" lengthAdjust="spacingAndGlyphs">編集</text>
<text x="708.0" y="1256.0" font-size="33" textLength="100.8" lengthAdjust="spacingAndGlyphs">アプリ</text>
<text x="804.0" y="1256.0" font-size="33" textLength="106.0" lengthAdjust="spacingAndGlyphs">が必要</text>
<text x="914.0" y="1256.0" font-size="33" textLength="86.9" lengthAdjust="spacingAndGlyphs">です）</text>
</g>
<g stroke="#fff" stroke-width="1.6" fill="#fff">
<text x="189.0" y="1075.0" font-size="46" textLength="184.0" lengthAdjust="spacingAndGlyphs">Illustrator</text>
<text x="370.0" y="1070.0" font-size="38" textLength="75.2" lengthAdjust="spacingAndGlyphs">ファ</text>
<text x="445.0" y="1070.0" font-size="38" textLength="79.0" lengthAdjust="spacingAndGlyphs">イル</text>
<text x="528.0" y="1070.0" font-size="38" textLength="36.0" lengthAdjust="spacingAndGlyphs">や</text>
<text x="565.0" y="1075.0" font-size="46" textLength="94.0" lengthAdjust="spacingAndGlyphs">SVG</text>
<text x="658.0" y="1070.0" font-size="38" textLength="72.2" lengthAdjust="spacingAndGlyphs">ファ</text>
<text x="732.0" y="1070.0" font-size="38" textLength="79.0" lengthAdjust="spacingAndGlyphs">イル</text>
<text x="813.0" y="1070.0" font-size="38" textLength="81.8" lengthAdjust="spacingAndGlyphs">は、</text>
<text x="192.0" y="1131.0" font-size="37" textLength="902.0" lengthAdjust="spacingAndGlyphs">色や地名などのさまざまな要素を自由に変更して</text>
<text x="189.0" y="1194.0" font-size="37" textLength="130.2" lengthAdjust="spacingAndGlyphs">ご利用</text>
<text x="316.0" y="1194.0" font-size="37" textLength="166.1" lengthAdjust="spacingAndGlyphs">いただけ</text>
<text x="478.0" y="1194.0" font-size="37" textLength="120.5" lengthAdjust="spacingAndGlyphs">ます。</text>
<text x="192.0" y="1256.0" font-size="33" textLength="128.9" lengthAdjust="spacingAndGlyphs">（ベジェ</text>
<text x="321.0" y="1256.0" font-size="33" textLength="66.0" lengthAdjust="spacingAndGlyphs">デー</text>
<text x="385.0" y="1256.0" font-size="33" textLength="67.1" lengthAdjust="spacingAndGlyphs">タの</text>
<text x="455.0" y="1256.0" font-size="33" textLength="67.2" lengthAdjust="spacingAndGlyphs">編集</text>
<text x="521.0" y="1256.0" font-size="33" textLength="101.9" lengthAdjust="spacingAndGlyphs">ソフト</text>
<text x="605.0" y="1256.0" font-size="33" textLength="43.1" lengthAdjust="spacingAndGlyphs">・</text>
<text x="640.0" y="1256.0" font-size="33" textLength="68.2" lengthAdjust="spacingAndGlyphs">編集</text>
<text x="708.0" y="1256.0" font-size="33" textLength="100.8" lengthAdjust="spacingAndGlyphs">アプリ</text>
<text x="804.0" y="1256.0" font-size="33" textLength="106.0" lengthAdjust="spacingAndGlyphs">が必要</text>
<text x="914.0" y="1256.0" font-size="33" textLength="86.9" lengthAdjust="spacingAndGlyphs">です）</text>
</g>
</g>
</svg>
</div>
</body></html>
